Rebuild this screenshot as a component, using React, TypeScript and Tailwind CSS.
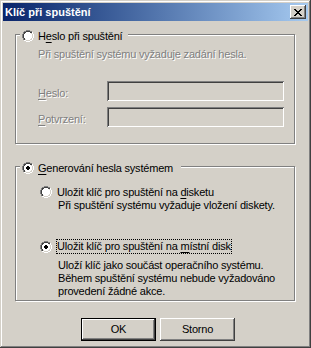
import React from "react";

const RADIO = [
  "....oooo....",
  "..ooiiiioo..",
  ".oiiwwwwiio.",
  ".oiwwwwwwio.",
  "oiwwwwwwwwio",
  "oiwwwwwwwwio",
  "oiwwwwwwwwio",
  "oiwwwwwwwwio",
  ".oiwwwwwwio.",
  ".oiiwwwwiio.",
  "..ooiiiioo..",
  "....oooo....",
];

const DOT: [number, number][] = [
  [4, 5], [4, 6],
  [5, 4], [5, 5], [5, 6], [5, 7],
  [6, 4], [6, 5], [6, 6], [6, 7],
  [7, 5], [7, 6],
];

const pixelColor = (ch: string, r: number, c: number) => {
  if (ch === "o") return r + c < 11 ? "#808080" : "#ffffff";
  if (ch === "i") return r + c < 12 ? "#404040" : "#d4d0c8";
  return "#ffffff";
};

const Radio = ({ checked }: { checked?: boolean }) => (
  <svg width="12" height="12" viewBox="0 0 12 12" shapeRendering="crispEdges" className="shrink-0 block">
    {RADIO.flatMap((row, r) =>
      row.split("").map((ch, c) =>
        ch === "." ? null : (
          <rect key={`${r}-${c}`} x={c} y={r} width="1" height="1" fill={pixelColor(ch, r, c)} />
        )
      )
    )}
    {checked && DOT.map(([r, c]) => <rect key={`d${r}-${c}`} x={c} y={r} width="1" height="1" fill="#000" />)}
  </svg>
);

const CloseGlyph = () => (
  <svg width="8" height="7" viewBox="0 0 8 7" shapeRendering="crispEdges" className="block">
    <path
      fill="#000"
      d="M0 0h2v1H0zM6 0h2v1H6zM1 1h2v1H1zM5 1h2v1H5zM2 2h4v1H2zM3 3h2v1H3zM2 4h4v1H2zM1 5h2v1H1zM5 5h2v1H5zM0 6h2v1H0zM6 6h2v1H6z"
    />
  </svg>
);

const raised =
  "shadow-[inset_-1px_-1px_#404040,inset_1px_1px_#fff,inset_-2px_-2px_#808080,inset_2px_2px_#d4d0c8]";
const sunken =
  "shadow-[inset_1px_1px_#808080,inset_-1px_-1px_#fff,inset_2px_2px_#404040,inset_-2px_-2px_#d4d0c8]";
const etched = "border border-[#808080] shadow-[inset_1px_1px_#fff,1px_1px_#fff]";
const disabled = "text-[#808080] [text-shadow:1px_1px_0_#fff]";

const Key = ({ children }: { children: React.ReactNode }) => (
  <span className="underline underline-offset-[2px]">{children}</span>
);

export default function App() {
  return (
    <div
      className="w-[311px] h-[348px] bg-[#d4d0c8] p-[3px] shadow-[inset_-1px_-1px_#404040,inset_1px_1px_#d4d0c8,inset_-2px_-2px_#808080,inset_2px_2px_#fff] font-['Liberation_Sans',sans-serif] text-[11px] leading-[13px] tracking-[-0.2px] text-black"
    >
      <div className="h-[18px] flex items-center justify-between bg-linear-to-r from-[#0a246a] to-[#a6caf0] pl-[2px] pr-[2px]">
        <span className="font-bold text-white tracking-normal">Klíč při spuštění</span>
        <div className={`w-[16px] h-[14px] bg-[#d4d0c8] flex items-center justify-center ${raised}`}>
          <CloseGlyph />
        </div>
      </div>

      <div className="pl-[12px] pt-[13px]">
        {/* heslo při spuštění */}
        <div className={`relative w-[280px] h-[110px] pl-[22px] pt-[13px] ${etched}`}>
          <div className="absolute top-[-5px] left-[4px] flex items-start bg-[#d4d0c8] pl-[2px] pr-[6px]">
            <Radio />
            <span className="ml-[4px] whitespace-nowrap">
              H<Key>e</Key>slo při spuštění
            </span>
          </div>
          <div className={`whitespace-nowrap ${disabled}`}>Při spuštění systému vyžaduje zadání hesla.</div>
          <div className="mt-[20px] flex">
            <span className={`w-[69px] pt-[6px] ${disabled}`}>
              <Key>H</Key>eslo:
            </span>
            <div className={`w-[177px] h-[20px] bg-[#d4d0c8] ${sunken}`} />
          </div>
          <div className="mt-[6px] flex">
            <span className={`w-[69px] pt-[6px] ${disabled}`}>
              <Key>P</Key>otvrzení:
            </span>
            <div className={`w-[177px] h-[20px] bg-[#d4d0c8] ${sunken}`} />
          </div>
        </div>

        {/* generování hesla systémem */}
        <div className={`relative mt-[22px] w-[280px] h-[135px] pl-[24px] pt-[19px] ${etched}`}>
          <div className="absolute top-[-5px] left-[4px] flex items-start bg-[#d4d0c8] pl-[2px] pr-[8px]">
            <Radio checked />
            <span className="ml-[4px] whitespace-nowrap">
              <Key>G</Key>enerování hesla systémem
            </span>
          </div>
          <div className="flex items-start">
            <Radio />
            <span className="ml-[5px] whitespace-nowrap">
              Uložit klíč pro spuštění na <Key>d</Key>isketu
            </span>
          </div>
          <div className="ml-[18px] whitespace-nowrap">Při spuštění systému vyžaduje vložení diskety.</div>
          <div className="mt-[27px] flex items-start">
            <div className="mt-[2px]">
              <Radio checked />
            </div>
            <span className="ml-[4px] whitespace-nowrap border border-dotted border-black">
              Uložit klíč pro spuštění na <Key>m</Key>ístní disk
            </span>
          </div>
          <div className="mt-[5px] ml-[18px] whitespace-nowrap">
            Uloží klíč jako součást operačního systému.
            <br />
            Během spuštění systému nebude vyžadováno
            <br />
            provedení žádné akce.
          </div>
        </div>

        <div className="mt-[17px] ml-[66px] flex gap-[4px]">
          <div className="w-[75px] h-[23px] border border-black">
            <div className={`w-full h-full flex items-center justify-center bg-[#d4d0c8] ${raised}`}>OK</div>
          </div>
          <div className={`w-[75px] h-[23px] flex items-center justify-center bg-[#d4d0c8] ${raised}`}>Storno</div>
        </div>
      </div>
    </div>
  );
}
